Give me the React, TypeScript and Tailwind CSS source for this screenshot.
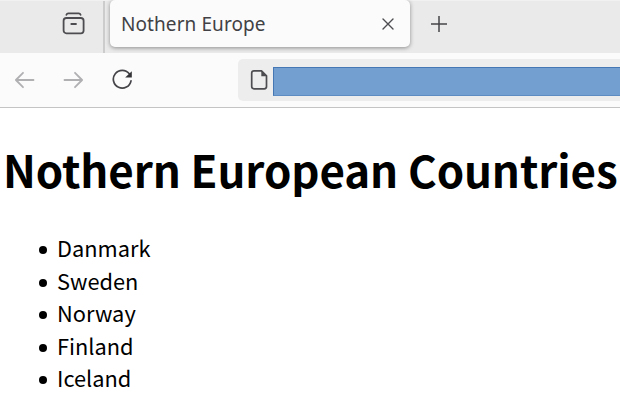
const countries = ["Danmark", "Sweden", "Norway", "Finland", "Iceland"];

function TabStrip() {
  return (
    <div className="flex h-[53px] border-t border-[#f1f1f1] bg-[#eaeaea]">
      <div className="flex w-[105px] shrink-0 border-r-2 border-[#cccccc] pt-[11px] pl-[62px]">
        <svg width="24" height="24" viewBox="0 0 24 24" fill="none" stroke="#4d4d51" strokeWidth="1.8" strokeLinecap="round">
          <path d="M4.4 2.8C4.8 1.7 5.4 1.4 6.3 1.4H16.7C17.6 1.4 18.2 1.7 18.6 2.8" />
          <rect x="1.6" y="6" width="20" height="15.3" rx="2.8" />
          <path d="M9.3 12H14" />
        </svg>
      </div>
      <div className="-mt-px ml-[5px] flex h-[47px] w-[300px] shrink-0 items-center justify-between rounded-[5px] bg-[#fbfbfb] pr-[15px] pl-[11px] shadow-[0_1px_4px_rgba(0,0,0,0.4)]">
        <span className="font-['Noto_Sans','Open_Sans',sans-serif] text-[19px] leading-[24px] tracking-[0.08px] whitespace-nowrap text-[#414145]">Nothern Europe</span>
        <svg width="14" height="14" viewBox="0 0 14 14" stroke="#4d4d51" strokeWidth="1.4" strokeLinecap="round">
          <path d="M2 2L12 12M12 2L2 12" />
        </svg>
      </div>
      <svg className="mt-[14px] ml-5 shrink-0" width="18" height="18" viewBox="0 0 18 18" stroke="#454549" strokeWidth="1.5">
        <path d="M1 9H17M9 1V17" />
      </svg>
    </div>
  );
}

function Toolbar() {
  return (
    <div className="flex h-[55px] border-b border-[#c4c4c4] bg-[#fbfbfb]">
      <div className="flex w-[238px] shrink-0 gap-[28px] pt-[16px] pl-[14px]">
        <svg width="21" height="22" viewBox="0 0 21 22" fill="none" stroke="#b0b0b3" strokeWidth="1.8" strokeLinecap="round" strokeLinejoin="round">
          <path d="M19.5 11H2M9 3.8L1.9 11L9 18.2" />
        </svg>
        <svg width="21" height="22" viewBox="0 0 21 22" fill="none" stroke="#b0b0b3" strokeWidth="1.8" strokeLinecap="round" strokeLinejoin="round">
          <path d="M1.5 11H19M12 3.8L19.1 11L12 18.2" />
        </svg>
        <svg width="22" height="22" viewBox="0 0 22 22" fill="none" stroke="#454549" strokeWidth="1.7" strokeLinecap="round">
          <path d="M17.3 4.8A8.9 8.9 0 1 0 19 11.8" />
          <path d="M19.8 2.2V8.6H13.2Z" fill="#343438" stroke="none" />
        </svg>
      </div>
      <div className="mt-[6px] flex h-[42px] flex-1 rounded-l-[5px] bg-[#ededed] pl-[12px]">
        <svg className="mt-[10px] shrink-0" width="19" height="22" viewBox="0 0 19 22" fill="none" stroke="#4d4d51" strokeWidth="1.7" strokeLinejoin="round">
          <path d="M4 1.8H11.5L16.5 6.8V17.5Q16.5 19.8 14.2 19.8H4Q1.7 19.8 1.7 17.5V4.1Q1.7 1.8 4 1.8Z" />
          <path d="M11.3 1.8V7.3H16.7Z" fill="#4d4d51" stroke="none" />
        </svg>
        <div className="mt-[8px] ml-[4px] h-[29px] flex-1 border-y border-l border-[#4477b4] border-b-[#5c8cc2] bg-[#729fcf]" />
      </div>
    </div>
  );
}

export default function App() {
  return (
    <div className="h-[403px] w-[620px] overflow-hidden bg-white">
      <TabStrip />
      <Toolbar />
      <main className="pt-[29px] pl-[3px] font-['Noto_Sans_CJK_SC',sans-serif] text-black">
        <h1 className="text-[43.9px] leading-[65px] font-bold tracking-[-0.1px] whitespace-nowrap">Nothern European Countries</h1>
        <ul className="mt-[30px] pl-[36px] text-[21.8px] leading-[32.5px]">
          {countries.map((country) => (
            <li key={country} className="flex items-center">
              <span className="mt-[4px] mr-[10px] h-2 w-2 rounded-full bg-black" />
              {country}
            </li>
          ))}
        </ul>
      </main>
    </div>
  );
}
